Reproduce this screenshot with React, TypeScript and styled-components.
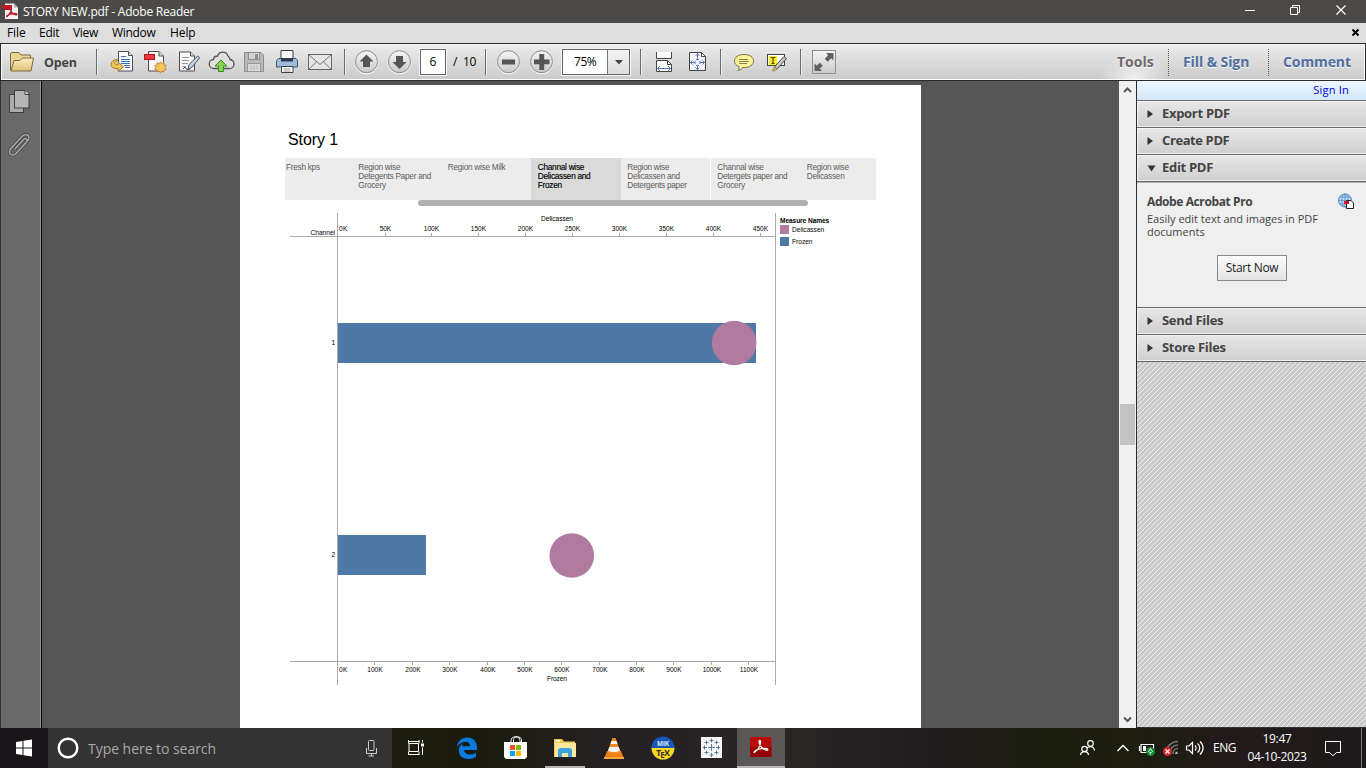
import React from "react";
import styled, { createGlobalStyle } from "styled-components";

const Global = createGlobalStyle`
  * { box-sizing: border-box; }
  html, body { margin: 0; padding: 0; overflow: hidden; }
  body { font-family: "Open Sans", "Noto Sans", sans-serif; font-size: 12px; color: #000; }
  svg { display: block; flex: none; }
`;

const Screen = styled.div`
  width: 1366px;
  height: 768px;
  display: flex;
  flex-direction: column;
  overflow: hidden;
  background: #565656;
`;

const Label = styled.span<{ $size?: number; $track?: number; $left?: number; $weight?: number; $color?: string; $w?: number }>`
  flex: none;
  white-space: nowrap;
  font-size: ${(p) => p.$size ?? 12}px;
  letter-spacing: ${(p) => p.$track ?? 0}px;
  margin-left: ${(p) => p.$left ?? 0}px;
  font-weight: ${(p) => p.$weight ?? 400};
  color: ${(p) => p.$color ?? "inherit"};
  ${(p) => (p.$w ? `width: ${p.$w}px;` : "")}
`;

const RaisedLabel = styled(Label)`
  padding-bottom: 2px;
`;

/* ---------- title bar and menu ---------- */

const TitleBar = styled.header`
  height: 23px;
  flex: none;
  display: flex;
  align-items: center;
  background: #4c4a48;
  color: #fff;
`;

const Spacer = styled.div`
  flex: 1;
`;

const MenuBar = styled.nav`
  height: 20px;
  flex: none;
  display: flex;
  align-items: center;
  background: #dedede;
`;

/* ---------- toolbar ---------- */

const Toolbar = styled.div`
  height: 38px;
  flex: none;
  display: flex;
  align-items: center;
  padding-right: 2px;
  border: 1px solid #2b2b2b;
  box-shadow: inset 0 0 0 1px #fafafa;
  background: linear-gradient(#ececec, #cacaca);
`;

const Separator = styled.div<{ $left: number; $right: number }>`
  flex: none;
  width: 2px;
  height: 26px;
  margin: 0 ${(p) => p.$right}px 0 ${(p) => p.$left}px;
  background: linear-gradient(90deg, #6b6b6b 50%, #f2f2f2 50%);
`;

const PageInput = styled.div`
  flex: none;
  width: 26px;
  height: 26px;
  border: 1px solid #666;
  outline: 1px solid #f4f4f4;
  background: #fff;
  display: flex;
  align-items: center;
  justify-content: center;
  font-size: 12px;
`;

const ZoomBox = styled(PageInput)`
  width: 68px;
  justify-content: flex-start;
`;

const ZoomArrow = styled.div`
  width: 22px;
  height: 24px;
  margin-left: auto;
  border-left: 1px solid #777;
  background: linear-gradient(#f4f4f4, #dcdcdc);
  display: flex;
  align-items: center;
  justify-content: center;
`;

const PaneTab = styled.div<{ $width: number; $active?: boolean; $pad: number }>`
  flex: none;
  width: ${(p) => p.$width}px;
  height: 34px;
  padding: 0 0 2px ${(p) => p.$pad}px;
  display: flex;
  align-items: center;
  font-size: 14px;
  font-weight: 700;
  letter-spacing: ${(p) => (p.$active ? 0 : -0.1)}px;
  white-space: nowrap;
  color: ${(p) => (p.$active ? "#6d6a68" : "#4f6f9f")};
  text-shadow: 0 1px 0 #fff;
  background: ${(p) => (p.$active ? "radial-gradient(ellipse 34px 26px at 50% 100%, #f0f0f0, rgba(240,240,240,0))" : "none")};
`;

const DottedRule = styled.div`
  flex: none;
  height: 27px;
  border-left: 1px dotted #555;
`;

/* ---------- workspace ---------- */

const Workspace = styled.main`
  height: 647px;
  flex: none;
  display: flex;
`;

const NavRail = styled.aside`
  width: 42px;
  flex: none;
  border-left: 1px solid #333;
  border-right: 1px solid #000;
  box-shadow: inset -1px 0 0 #969696;
  background: #696969;
  padding: 9px 0 0 7px;
  display: flex;
  flex-direction: column;
  gap: 18px;
`;

const Canvas = styled.section`
  width: 1077px;
  flex: none;
  padding: 4px 0 0 198px;
  background: #565656;
`;

const Sheet = styled.article`
  width: 681px;
  height: 643px;
  background: #fff;
  padding: 44px 0 0 45px;
  overflow: hidden;
  font-family: "Liberation Sans", Arial, sans-serif;
`;

const StoryTitle = styled.h1`
  margin: 0;
  padding-left: 3px;
  height: 29px;
  font-size: 16px;
  line-height: 21px;
  letter-spacing: -0.1px;
  font-weight: 400;
`;

const StoryStrip = styled.div`
  width: 591px;
  height: 42px;
  display: flex;
  background: #ececec;
`;

const StoryPoint = styled.div<{ $width: number; $first?: boolean; $active?: boolean; $edge?: boolean }>`
  flex: none;
  width: ${(p) => p.$width}px;
  padding: 5px 0 0 ${(p) => (p.$first ? 1 : 6.8)}px;
  font-size: 8.25px;
  line-height: 9px;
  letter-spacing: -0.27px;
  white-space: pre;
  color: ${(p) => (p.$active ? "#000" : "#5c5c5c")};
  ${(p) => (p.$active ? "-webkit-text-stroke: 0.15px #000;" : "")}
  background: ${(p) => (p.$active ? "#dadada" : "transparent")};
  border-right: ${(p) => (p.$edge ? "1px solid #fff" : "0")};
`;

const StoryScroll = styled.div`
  width: 390px;
  height: 6px;
  margin-left: 133px;
  border-radius: 3px;
  background: #b0b0b0;
`;

const Dashboard = styled.div`
  display: flex;
`;

const Legend = styled.div`
  padding: 10px 0 0 3px;
  font-size: 6.6px;
  display: flex;
  flex-direction: column;
`;

const LegendTitle = styled.div`
  height: 8px;
  line-height: 9px;
  font-weight: 700;
  letter-spacing: -0.08px;
`;

const LegendItem = styled.div`
  height: 11.5px;
  display: flex;
  align-items: center;
  gap: 3px;
`;

const Swatch = styled.span<{ $color: string }>`
  width: 9px;
  height: 9px;
  background: ${(p) => p.$color};
`;

const ScrollTrack = styled.div`
  width: 17px;
  flex: none;
  background: #f0f0f0;
  display: flex;
  flex-direction: column;
  align-items: center;
`;

const ScrollThumb = styled.div`
  width: 15px;
  height: 41px;
  margin: 306px 0 auto;
  background: #c2c2c2;
`;

/* ---------- task pane ---------- */

const TaskPane = styled.aside`
  width: 230px;
  flex: none;
  display: flex;
  flex-direction: column;
  border-left: 1px solid #2b2b2b;
`;

const SignIn = styled.div`
  height: 20px;
  flex: none;
  padding-right: 17px;
  display: flex;
  align-items: center;
  justify-content: flex-end;
  border-bottom: 1px solid #6a6a6a;
  background: linear-gradient(#eef7fe, #d2e6f6);
`;

const PaneHeader = styled.div`
  height: 27px;
  flex: none;
  display: flex;
  align-items: center;
  padding: 0 0 1px 10px;
  border-bottom: 1px solid #666;
  box-shadow: inset 1px 1px 0 #f4f4f4, inset 0 -1px 0 #f0f0f0;
  background: linear-gradient(#e7e7e7, #cfcfcf);
`;

const EditBody = styled.div`
  height: 126px;
  flex: none;
  padding: 11px 11px 0 10px;
  display: flex;
  flex-direction: column;
  background: #efefef;
  border-bottom: 1px solid #666;
  box-shadow: inset 0 1px 0 #b5b5b5;
`;

const EditTop = styled.div`
  height: 19px;
  display: flex;
  align-items: flex-start;
  justify-content: space-between;
`;

const EditText = styled.p`
  margin: 0;
  font-size: 11px;
  line-height: 13px;
  color: #444;
  white-space: pre;
`;

const StartButton = styled.button`
  width: 70px;
  height: 26px;
  margin: 17px 0 0 70px;
  padding: 0 0 2px;
  border: 1px solid #8b8b8b;
  background: linear-gradient(#fbfbfb, #e4e4e4);
  font: 12px "Open Sans", sans-serif;
  letter-spacing: -0.3px;
  color: #222;
`;

const Hatch = styled.div`
  flex: 1;
  border-bottom: 1px solid #333;
  background: repeating-linear-gradient(135deg, #c9c9c9 0, #c9c9c9 2.3px, #f4f4f4 2.9px, #c9c9c9 3.5355px);
`;

/* ---------- taskbar ---------- */

const Taskbar = styled.footer`
  height: 40px;
  flex: none;
  display: flex;
  background: linear-gradient(90deg, #1a1518 0, #1b1619 48px, #1c1d0e 392px, #1a1b0d 480px, #252122 600px, #2a2626 800px, #201c1e 930px, #1b1d0f 1040px, #1d1d10 1130px, #231a1b 1240px, #1d1a1a 1366px);
`;

const TaskTile = styled.div<{ $width?: number; $active?: boolean; $mark?: number; $gap?: number }>`
  flex: none;
  width: ${(p) => p.$width ?? 48}px;
  height: 40px;
  margin-right: ${(p) => p.$gap ?? 0}px;
  display: flex;
  align-items: center;
  justify-content: center;
  background-color: ${(p) => (p.$active ? "#5a5857" : "transparent")};
  ${(p) => (p.$mark ? `background-image: linear-gradient(#b9b5b6, #b9b5b6); background-size: ${p.$mark}px 2px; background-position: bottom center; background-repeat: no-repeat;` : "")}
`;

const SearchBox = styled.div`
  flex: none;
  width: 344px;
  display: flex;
  align-items: center;
  background: #333;
`;

const Clock = styled.div`
  width: 74px;
  flex: none;
  color: #fff;
  font-size: 12px;
  line-height: 18px;
  letter-spacing: -0.35px;
  text-align: center;
  padding: 0 2px 1px 0;
  white-space: nowrap;
`;

const ShowDesktop = styled.div`
  width: 5px;
  margin-left: auto;
  border-left: 1px solid #777;
`;

/* Icons are drawn in window coordinates; x/y give the corner of the visible area. */
const Pic = ({ x, y, w, h, children }: { x: number; y: number; w: number; h: number; children: React.ReactNode }) => (
  <svg width={w} height={h} viewBox={`${x} ${y} ${w} ${h}`} fill="none">
    {children}
  </svg>
);

const Tool = ({ x, w = 33, children }: { x: number; w?: number; children: React.ReactNode }) => (
  <Pic x={x} y={49} w={w} h={26}>
    {children}
  </Pic>
);

const Task = ({ x, children }: { x: number; children: React.ReactNode }) => (
  <Pic x={x} y={728} w={48} h={40}>
    {children}
  </Pic>
);

const PdfSwirl = ({ stroke, width }: { stroke: string; width: number }) => (
  <path
    d="M2 15 C5 14 9 9 9.5 3 C9.5 0.5 7.5 0.5 7.7 3 C8.2 8 13 12.5 17 12.6 C19 12.2 18 10.5 15 10.5 C10 10.6 5 12 2.5 14 C1.5 15 1.5 16 3 15"
    stroke={stroke}
    strokeWidth={width}
    fill="none"
  />
);

const RoundBack = ({ cx }: { cx: number }) => (
  <>
    <circle cx={cx} cy={62.6} r={11.3} stroke="#fff" />
    <circle cx={cx} cy={61.7} r={11} fill="url(#btn)" stroke="#8a8a8a" />
  </>
);

const ToolbarIcons = () => (
  <>
    <Tool x={105}>
      <path d="M118.500 51.500h10l4 4v15.500h-14z" fill="#fbfbfb" stroke="#4c4c4c" />
      <path d="M128.500 51.500v4h4" fill="#ddd" stroke="#4c4c4c" />
      <path d="M121 56.500h5M121 59.500h9M121 61.500h9M121 63.500h9M124 65.500h6M125 67.500h5" stroke="#3a70b8" />
      <path d="M116.500 59.500c-3.500.5-5.500 2.500-5.500 5 0 2.700 2.500 4 7 4v2.800l5.500-4.600-5.500-4.700v2.800c-2.200 0-3.300-.5-3.300-1.500 0-1.400 1.300-2.300 3.300-3z" fill="#f1c658" stroke="#a8781c" />
    </Tool>
    <Tool x={138}>
      <path d="M148.500 51.500h10.500l4.500 4.500v15h-15z" fill="#f7f7f7" stroke="#4c4c4c" />
      <path d="M159 51.500v4.500h4.500" fill="#ddd" stroke="#4c4c4c" />
      <rect x="144.500" y="54.500" width="10" height="5" fill="#e5393f" stroke="#b8141c" />
      <path d="M161 62l1.300 1.900 2.100-1 .1 2.300 2.200.4-1 2 1 2-2.200.4-.1 2.300-2.100-1-1.300 1.900-1.300-1.900-2.100 1-.1-2.300-2.200-.4 1-2-1-2 2.200-.4.1-2.300 2.100 1z" transform="translate(-.5 -.2)" fill="#f4c45c" stroke="#b58224" strokeWidth=".8" />
    </Tool>
    <Tool x={171}>
      <path d="M179.500 52h11l4 4v15h-15z" fill="#f7f7f7" stroke="#4c4c4c" />
      <path d="M190.500 52v4h4" fill="#ddd" stroke="#4c4c4c" />
      <path d="M182 57.500h7M182 60.500h7M182 63.500h6M182 66.500h4" stroke="#999" />
      <path d="M197.500 56l2.200 1.700-7.500 9.300-4.200 2.300 1-4.500z" fill="#c6d5e3" stroke="#41536a" />
      <path d="M183 69l2-2 1.500 2.300 4-.3" stroke="#444" />
    </Tool>
    <Tool x={204}>
      <path d="M216 68.500h-2a4.500 4.500 0 0 1-.5-9 4 4 0 0 1 4-3.500 5.500 5.500 0 0 1 10.500 0 4.500 4.500 0 0 1 2 3.500 4.500 4.500 0 0 1-1 9h-3z" fill="#dfdfdf" stroke="#555" strokeWidth="1.300" />
      <path d="M221 60l6 6h-3.500v5.500h-5v-5.500h-3.500z" fill="#8bd353" stroke="#3a8a1c" />
    </Tool>
    <Tool x={237}>
      <path d="M244.500 52.500h16.500l2.500 2.500v16.500h-19z" fill="#b9b9b9" stroke="#8d8d8d" />
      <rect x="248.500" y="52.500" width="11" height="7" fill="#d2d2d2" stroke="#8d8d8d" />
      <rect x="255" y="54" width="3" height="5" fill="#8f8f8f" />
      <rect x="247.500" y="63.500" width="13" height="8" fill="#d8d8d8" stroke="#999" />
      <path d="M250 66.500h8M250 68.500h8" stroke="#b5b5b5" strokeDasharray="2 1" />
    </Tool>
    <Tool x={270}>
      <path d="M281 60v-9.500h12v9.500" fill="#f8f8f8" stroke="#3f3f3f" />
      <path d="M278.500 58.500h17.500l1.500 2v6.500h-21v-6.500z" fill="#9dbddb" stroke="#41566f" />
      <path d="M281 58h12v3.500h-12z" fill="#2d3d4f" />
      <path d="M281.500 66.500h11.500v6h-11.500z" fill="#fff" stroke="#3f3f3f" />
      <path d="M283.500 69h7M283.500 71h7" stroke="#999" />
    </Tool>
    <Tool x={303} w={41}>
      <rect x="308.500" y="54.500" width="23" height="15" fill="#e5e5e5" stroke="#666" />
      <path d="M309 55l11 9.500L331 55M309 69l8-7.500M331 69l-8-7.500" stroke="#777" />
    </Tool>
  </>
);

const ticksTop = [385.5, 431.5, 478.5, 525.5, 572.5, 619.5, 666.5, 713.5, 760.5];
const ticksBottom = [374.5, 412.5, 449.5, 487.5, 524.5, 561.5, 599.5, 636.5, 673.5, 711.5, 748.5];

const Chart = () => (
  <Pic x={285} y={206} w={492} h={500}>
    <path d="M337.500 213v472M775.500 213v472M290 236.500h486M290 661.500h486" stroke="#aaa" />
    <rect x="338" y="323" width="418" height="40" fill="#4e79a7" />
    <rect x="338" y="535" width="88" height="40" fill="#4e79a7" />
    <circle cx="734.200" cy="343" r="22.300" fill="#b07aa1" />
    <circle cx="571.800" cy="555.500" r="22.300" fill="#b07aa1" />
    <g fill="#000" fontSize="6.600">
      <text x="541" y="221" textLength="32">Delicassen</text>
      <text x="310.500" y="235" textLength="24.500">Channel</text>
      <text x="339" y="231" textLength="8.300">0K</text>
      <text x="331.500" y="345.300">1</text>
      <text x="331.500" y="557.300">2</text>
      <text x="339" y="672" textLength="8.300">0K</text>
      <text x="547" y="681" textLength="20">Frozen</text>
      {ticksTop.map((x, i) => (
        <React.Fragment key={x}>
          <path d={`M${x} 233v3`} stroke="#aaa" />
          <text x={x} y="231" textAnchor="middle" textLength={i ? 15.3 : 11.5}>{`${(i + 1) * 50}K`}</text>
        </React.Fragment>
      ))}
      {ticksBottom.map((x, i) => (
        <React.Fragment key={x}>
          <path d={`M${x} 662v3`} stroke="#aaa" />
          <text x={x + 0.5} y="672" textAnchor="middle" textLength={i > 8 ? 18.5 : 15.3}>{`${(i + 1) * 100}K`}</text>
        </React.Fragment>
      ))}
    </g>
  </Pic>
);

const Arrow = ({ open }: { open?: boolean }) => (
  <svg width="15" height="10" viewBox="0 0 15 10">
    <path d={open ? "M0.500 2.500h8l-4 6z" : "M0.500 1v8l5.500-4z"} fill="#333" />
  </svg>
);

const PaneRow = ({ text, track = -0.45, open }: { text: string; track?: number; open?: boolean }) => (
  <PaneHeader>
    <Arrow open={open} />
    <RaisedLabel $size={13} $weight={700} $track={track} $color="#444">{text}</RaisedLabel>
  </PaneHeader>
);

export default function App() {
  return (
    <Screen>
      <Global />
      <TitleBar>
        <Pic x={0} y={0} w={23} h={23}>
          <path d="M5 3.500h9l4 4v11.500h-13z" fill="#f4f4f4" />
          <path d="M14 3.500v4h4" fill="#aaa" />
          <path d="M2 5h10v5h-7l-3-2z" fill="#bd1622" />
          <g transform="translate(5.500 7) scale(.62)"><PdfSwirl stroke="#c2182b" width={2.4} /></g>
        </Pic>
        <Label $size={12} $track={-0.23}>STORY NEW.pdf - Adobe Reader</Label>
        <Spacer />
        <Pic x={1236} y={0} w={130} h={23}>
          <path d="M1245 10.500h10" stroke="#fff" />
          <path d="M1290.500 7.500h7v7h-7zM1292.500 7.500v-2h7v7h-2" stroke="#fff" />
          <path d="M1336.500 5.500l9 9M1345.500 5.500l-9 9" stroke="#fff" strokeWidth="1.200" />
        </Pic>
      </TitleBar>

      <MenuBar>
        <RaisedLabel $left={7} $w={32} $track={-0.1}>File</RaisedLabel>
        <RaisedLabel $w={34} $track={-0.25}>Edit</RaisedLabel>
        <RaisedLabel $w={39} $track={-0.3}>View</RaisedLabel>
        <RaisedLabel $w={58} $track={-0.3}>Window</RaisedLabel>
        <RaisedLabel $track={-0.1}>Help</RaisedLabel>
        <Spacer />
        <Pic x={1348} y={24} w={18} h={18}>
          <path d="M1352.500 29.500l6 6M1358.500 29.500l-6 6" stroke="#000" strokeWidth="2" />
        </Pic>
      </MenuBar>

      <Toolbar>
        <Pic x={1} y={49} w={43} h={26}>
          <defs>
            <linearGradient id="btn" x1="0" y1="0" x2="0" y2="1"><stop stopColor="#f6f6f6" /><stop offset="1" stopColor="#c9c9c9" /></linearGradient>
            <linearGradient id="fold" x1="0" y1="0" x2="0" y2="1"><stop stopColor="#fbefc2" /><stop offset="1" stopColor="#dcc277" /></linearGradient>
          </defs>
          <path d="M10.500 70V54l1-1.500h7.500l2 2.500h9.500v15z" fill="#ead595" stroke="#7b6a3b" />
          <path d="M11 71l3-10.500h6l2.500-2.500h11l-2.500 13z" fill="url(#fold)" stroke="#7b6a3b" />
        </Pic>
        <Label $size={12.5} $weight={700} $color="#444" $track={-0.2} $w={33}>Open</Label>
        <Separator $left={19} $right={7} />
        <ToolbarIcons />
        <Separator $left={0} $right={7} />
        <Tool x={353} w={67}>
          <RoundBack cx={366.5} />
          <path d="M366.500 54.500l7 7h-3.500v5.500h-7v-5.500h-3.500z" fill="#555" />
          <RoundBack cx={399.5} />
          <path d="M399.500 69l7-7h-3.500v-6h-7v6h-3.500z" fill="#555" />
        </Tool>
        <PageInput><RaisedLabel>6</RaisedLabel></PageInput>
        <RaisedLabel $left={7} $w={10}>/</RaisedLabel>
        <RaisedLabel $w={15} $track={-0.3}>10</RaisedLabel>
        <Separator $left={7} $right={7} />
        <Tool x={494} w={68}>
          <RoundBack cx={508.5} />
          <path d="M502 59.500h13v5h-13z" fill="#555" />
          <RoundBack cx={541.5} />
          <path d="M534 59.500h5.300v-5.500h4.900v5.500h5.300v4.800h-5.300v5.700h-4.900v-5.700h-5.300z" fill="#555" />
        </Tool>
        <ZoomBox>
          <RaisedLabel $left={11} $track={-0.45}>75%</RaisedLabel>
          <ZoomArrow>
            <svg width="8" height="5"><path d="M0 0h8l-4 4.500z" fill="#444" /></svg>
          </ZoomArrow>
        </ZoomBox>
        <Separator $left={10} $right={6} />
        <Tool x={648} w={72}>
          <path d="M656.500 52v6.500h15V52" fill="#fafafa" stroke="#444" />
          <path d="M656.500 71.500v-11h11l4 4v7z" fill="#fafafa" stroke="#444" />
          <path d="M667.500 60.500v4h4" stroke="#444" />
          <path d="M657 68.500h14M660 66l-2.500 2.500L660 71M668 66l2.500 2.500L668 71" stroke="#5877b5" />
          <path d="M689.500 52.500h12l4 4v14h-16z" fill="#f4f6fb" stroke="#444" />
          <path d="M701.500 52.500v4h4" stroke="#444" />
          <path d="M690 62.500h5M700 62.500h5M697.500 53v6M697.500 65v5" stroke="#5877b5" />
          <path d="M692.500 60.500l-2 2 2 2M702.500 60.500l2 2-2 2M695.500 56l2-2 2 2M695.500 67.500l2 2 2-2M695 61v3M700 61v3M696 59.500h3M696 65.500h3" stroke="#5877b5" />
        </Tool>
        <Separator $left={0} $right={6} />
        <Tool x={728} w={72}>
          <path d="M744 54.500c6 0 9.500 2.700 9.500 6.500 0 4-4 6.500-9 6.500l-2 0c-.5 1.500-2 2.500-4.500 3 1-1 1.500-2.500 1-4-3-1-4.500-3-4.500-5.500 0-4 4-6.500 9.500-6.500z" fill="#fdf398" stroke="#77724a" />
          <path d="M739 59.500h9M739 61.500h10M739 63.500h8" stroke="#8b8450" />
          <rect x="767.500" y="54.500" width="17" height="11" fill="#fff" stroke="#444" />
          <rect x="769" y="56" width="8" height="9" fill="#ffef20" />
          <path d="M770.500 57.500h5M773 57v7M771.500 63.500h3" stroke="#4b4300" strokeWidth="1.200" />
          <path d="M784 56.500l2.500 2-7.500 8.500-3 2.500-2-1 2-3.500z" fill="#c5c5c5" stroke="#4a4a4a" />
          <path d="M774.500 67l2 2-2 1.800h-2z" fill="#e5d63c" stroke="#6c641f" strokeWidth=".7" />
        </Tool>
        <Separator $left={0} $right={8} />
        <Tool x={810} w={30}>
          <rect x="812.500" y="50.500" width="23" height="23" fill="url(#btn)" stroke="#8e8e8e" />
          <path d="M826 53h7.500v7.500l-2.300-2.300-3.500 3.500-3-3 3.500-3.500zM822 71h-7.500v-7.500l2.300 2.300 3-3 3 3-3 3z" fill="#606060" />
        </Tool>
        <Spacer />
        <PaneTab $width={68} $pad={17} $active>Tools</PaneTab>
        <DottedRule />
        <PaneTab $width={99} $pad={14}>Fill &amp; Sign</PaneTab>
        <DottedRule />
        <PaneTab $width={94} $pad={14}>Comment</PaneTab>
      </Toolbar>

      <Workspace>
        <NavRail>
          <Pic x={8} y={90} w={24} h={24}>
            <rect x="9.500" y="94.500" width="14" height="18" fill="#aaa" stroke="#3d3d3d" />
            <path d="M14.500 90.500h10.500l4 4v13.500h-14.500z" fill="#b5b5b5" stroke="#3d3d3d" />
            <path d="M25 90.500v4h4" fill="#ddd" stroke="#3d3d3d" />
          </Pic>
          <Pic x={8} y={132} w={24} h={26}>
            <g strokeLinecap="round">
              <path d="M15 149l8.500-9.500c2-2 5 0 3 2.500L16 153.500c-3.500 3.500-9 0-5.500-4.500l11.500-12.500c4-4 9-1 6 4" stroke="#444" strokeWidth="2.800" />
              <path d="M15 149l8.500-9.500c2-2 5 0 3 2.500L16 153.500c-3.500 3.500-9 0-5.500-4.500l11.500-12.500c4-4 9-1 6 4" stroke="#b2b2b2" strokeWidth="1.300" />
            </g>
          </Pic>
        </NavRail>

        <Canvas>
          <Sheet>
            <StoryTitle>Story 1</StoryTitle>
            <StoryStrip>
              <StoryPoint $width={66.5} $first>Fresh kps</StoryPoint>
              <StoryPoint $width={89.5}>{"Region wise\nDetegents Paper and\nGrocery"}</StoryPoint>
              <StoryPoint $width={90}>Region wise Milk</StoryPoint>
              <StoryPoint $width={89.5} $active>{"Channal wise\nDelicassen and\nFrozen"}</StoryPoint>
              <StoryPoint $width={90} $edge>{"Region wise\nDelicassen and\nDetergents paper"}</StoryPoint>
              <StoryPoint $width={89.5}>{"Channal wise\nDetergets paper and\nGrocery"}</StoryPoint>
              <StoryPoint $width={75}>{"Region wise\nDelicassen"}</StoryPoint>
            </StoryStrip>
            <StoryScroll />
            <Dashboard>
              <Chart />
              <Legend>
                <LegendTitle>Measure Names</LegendTitle>
                <LegendItem><Swatch $color="#b07aa1" />Delicassen</LegendItem>
                <LegendItem><Swatch $color="#4e79a7" />Frozen</LegendItem>
              </Legend>
            </Dashboard>
          </Sheet>
        </Canvas>

        <ScrollTrack>
          <svg width="17" height="17"><path d="M5 11l3.500-3.500L12 11" fill="none" stroke="#555" strokeWidth="2" /></svg>
          <ScrollThumb />
          <svg width="17" height="17"><path d="M5 6.500l3.500 3.500L12 6.500" fill="none" stroke="#555" strokeWidth="2" /></svg>
        </ScrollTrack>

        <TaskPane>
          <SignIn><RaisedLabel $size={11} $color="#0000e0" $track={0.22}>Sign In</RaisedLabel></SignIn>
          <PaneRow text="Export PDF" track={-0.3} />
          <PaneRow text="Create PDF" track={-0.4} />
          <PaneRow text="Edit PDF" track={-0.3} open />
          <EditBody>
            <EditTop>
              <Label $size={12} $weight={700} $color="#444" $track={-0.4}>Adobe Acrobat Pro</Label>
              <Pic x={1338} y={193} w={17} h={17}>
                <circle cx="1345" cy="200.500" r="6.500" fill="#b9d8f5" stroke="#4d80bd" />
                <path d="M1345 194v13M1338.500 200.500h13M1340 197h10M1340 204h10" stroke="#5b8fc9" strokeWidth=".8" />
                <ellipse cx="1345" cy="200.500" rx="3.200" ry="6.500" stroke="#5b8fc9" strokeWidth=".8" />
                <path d="M1346.500 200.500h4.500l2.500 2.500v5.500h-7z" fill="#fff" stroke="#222" />
                <rect x="1344" y="201" width="5" height="3" fill="#d2142b" />
              </Pic>
            </EditTop>
            <EditText>{"Easily edit text and images in PDF\ndocuments"}</EditText>
            <StartButton>Start Now</StartButton>
          </EditBody>
          <PaneRow text="Send Files" track={-0.3} />
          <PaneRow text="Store Files" track={-0.3} />
          <Hatch />
        </TaskPane>
      </Workspace>

      <Taskbar>
        <TaskTile>
          <Task x={0}>
            <path d="M16 742l6.500-1v6.500H16zM23.500 740.800l8.500-1.200v7.900h-8.500zM16 748.500h6.500v6.500l-6.500-1zM23.500 748.500h8.500v7.900l-8.500-1.200z" fill="#fff" />
          </Task>
        </TaskTile>
        <SearchBox>
          <Pic x={48} y={728} w={40} h={40}>
            <circle cx="68" cy="748" r="9.300" stroke="#fff" strokeWidth="2.400" />
          </Pic>
          <Label $size={14} $color="#a8a8a8" $track={-0.04}>Type here to search</Label>
          <Spacer />
          <Pic x={360} y={728} w={32} h={40}>
            <rect x="368.500" y="740.500" width="5.500" height="10" rx="1" stroke="#ccc" />
            <path d="M366.500 748v5.500h10V748M371.500 754v2M368.500 756h5.500" stroke="#ccc" />
          </Pic>
        </SearchBox>
        <TaskTile $gap={3}>
          <Task x={392}>
            <path d="M409 743.500h9.500v8h-9.500zM408 754.500h11.500M408 741.500h11.500M408.500 740v3.500M419 740v3.500M408.500 751.500v3.500M419 751.500v3.500M422.500 740v2.500M422.500 747.500v7.500" stroke="#fff" />
            <rect x="421" y="743.500" width="3" height="3" fill="#fff" />
          </Task>
        </TaskTile>
        <TaskTile $gap={1}>
          <Task x={443}>
            <path d="M457 747c.5-5.500 4.500-9.500 10.300-9.500 6.200 0 9.700 4.200 9.700 10v2.500h-13c.3 3 2.700 4.400 6 4.400 2.300 0 4.300-.6 6-1.600v4.200c-2 1.300-4.700 1.900-7.300 1.900-6 0-9.900-3.400-9.900-8.500 0-3.300 1.700-5.700 4.700-7.400-.9 1-1.400 2-1.600 3.300h8.100c0-2.800-1.400-4.500-4.300-4.500-3.500 0-6.600 2-8.700 5.200z" fill="#0a7ae0" />
          </Task>
        </TaskTile>
        <TaskTile $gap={1}>
          <Task x={492}>
            <path d="M511 742.500v-2c0-5 9-5 9 0v2M513.500 742v-2.500c0-4 8-3 8 0v3" stroke="#fff" />
            <path d="M504 742h23v15l-2 2h-19l-2-2z" fill="#fff" />
            <path d="M510 745h5v5h-5z" fill="#f25022" /><path d="M516 745h5v5h-5z" fill="#7fba00" />
            <path d="M510 751h5v5h-5z" fill="#00a4ef" /><path d="M516 751h5v5h-5z" fill="#ffb900" />
          </Task>
        </TaskTile>
        <TaskTile $gap={1} $mark={40}>
          <Task x={541}>
            <path d="M554 739h8l2 2.500h11v15.500h-21z" fill="#f3c95b" />
            <path d="M556 740h4v1.500h-4z" fill="#fff" />
            <path d="M555 743h21v14h-21z" fill="#ffe79b" />
            <path d="M558 749.500l2-1.500h10l2 1.500v7.500h-4v-4h-6v4h-4z" fill="#3ba3e0" />
          </Task>
        </TaskTile>
        <TaskTile $gap={1}>
          <Task x={590}>
            <path d="M607 751h14l3 8h-20z" fill="#ee7d12" />
            <path d="M612.500 738h3l5 14c-1.500 3.500-11.500 3.500-13 0z" fill="#f28b1e" />
            <path d="M611.500 741h5l1 3h-7zM609.300 747h9.400l1.200 3.700c-2 1.800-9.800 1.800-11.800 0z" fill="#f3f3f3" />
            <path d="M604 757h20v2h-20z" fill="#f9a548" />
          </Task>
        </TaskTile>
        <TaskTile $gap={1}>
          <Task x={639}>
            <circle cx="663" cy="748" r="11.500" fill="#1558b8" />
            <path d="M651.500 748h23a11.500 11.500 0 0 1-23 0z" fill="#ffd91c" />
            <text x="657" y="746" fontSize="6.500" fontWeight="700" fill="#d9e5f5" textLength="12">MiK</text>
            <g fontSize="9" fontWeight="700" fill="#333">
              <text x="656" y="756">T</text>
              <text x="660.200" y="758" fontSize="8">E</text>
              <text x="664" y="756">X</text>
            </g>
          </Task>
        </TaskTile>
        <TaskTile $gap={1}>
          <Task x={688}>
            <rect x="701" y="737" width="21" height="21" fill="#f5f5f5" />
            <path d="M711.500 744v7M708 747.500h7M711.500 738.500v4M709.500 740.500h4M711.500 753v4M709.500 755h4M703 747.500h4M704.500 745.500v4M716 747.500h4M718.500 745.500v4M706.500 740.500v4M704.500 742.500h4M716.500 740.500v4M714.500 742.500h4M706.500 750.500v4M704.500 752.500h4M716.500 750.500v4M714.500 752.500h4" stroke="#49708f" strokeWidth=".9" />
          </Task>
        </TaskTile>
        <TaskTile $active $mark={48}>
          <Task x={737}>
            <rect x="750" y="737" width="21.500" height="20" fill="#b80c0c" />
            <path d="M750 747h21.500v10H750z" fill="#960606" />
            <g transform="translate(752.500 739.500) scale(.85)"><PdfSwirl stroke="#fff" width={1.5} /></g>
          </Task>
        </TaskTile>
        <Spacer />
        <Pic x={1070} y={728} w={141} h={40}>
          <g stroke="#fff" strokeWidth="1.200">
            <circle cx="1090.500" cy="743.500" r="2.800" /><path d="M1086 750.500c.5-5 8-5 8.500 0" />
            <circle cx="1084.500" cy="749" r="2.700" fill="#1d1d10" /><path d="M1080.500 755c.5-4.500 7.500-4.500 8 0" />
            <path d="M1117.500 751l5.500-5.500 5.500 5.500" strokeWidth="1.400" />
            <path d="M1141 744.500h12.500v8H1141z" />
            <path d="M1139.500 746v5" />
            <path d="M1186.500 746h2.500l3.500-3.500v11l-3.500-3.500h-2.500zM1195 745.500c1.500 1.500 1.500 3.500 0 5M1197.500 743.500c3 2.500 3 6.500 0 9M1200 741.500c4 3.500 4 9.500 0 13" />
          </g>
          <path d="M1143 746h3v5h-3z" fill="#fff" />
          <circle cx="1150.500" cy="751.500" r="4.500" fill="#0d8a2c" />
          <path d="M1150.500 748.500l2 3-2 1.500-2-1.500zM1150.500 752v2.500" stroke="#fff" strokeWidth=".9" />
          <path d="M1166 754c0-7 5-12.500 12-12.500M1169.500 754c0-5 3.500-9 8.500-9M1173 754c0-3 2-5.500 5-5.500" stroke="#777" strokeWidth="1.500" />
          <path d="M1175 754c0-1.500 1-2.500 2.500-2.500v2.500z" fill="#bbb" />
          <circle cx="1167.500" cy="751.500" r="4.500" fill="#d9232e" />
          <path d="M1165.500 749.500l4 4M1169.500 749.500l-4 4" stroke="#fff" strokeWidth="1.200" />
        </Pic>
        <TaskTile $width={27} $gap={3}><RaisedLabel $color="#fff" $track={-0.55}>ENG</RaisedLabel></TaskTile>
        <TaskTile $width={74}><Clock>19:47<br />04-10-2023</Clock></TaskTile>
        <Pic x={1315} y={728} w={46} h={40}>
          <path d="M1325.500 741.500h15v11h-4l-3.500 3.300-3.500-3.300h-4z" stroke="#fff" />
        </Pic>
        <ShowDesktop />
      </Taskbar>
    </Screen>
  );
}
